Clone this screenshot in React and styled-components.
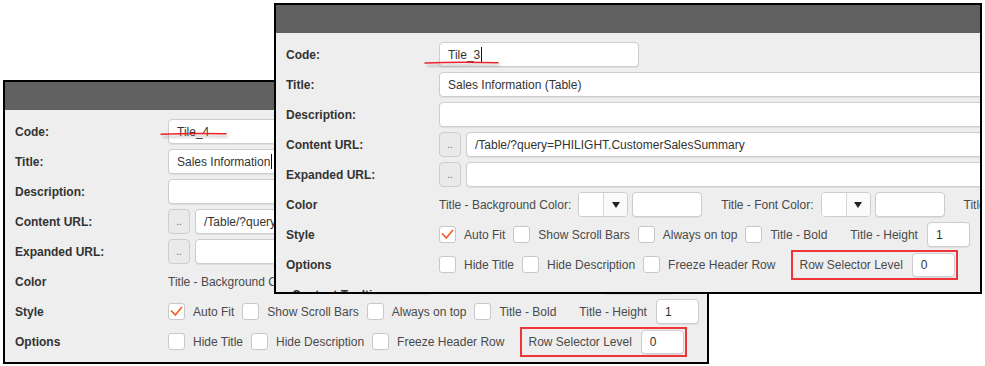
import React from 'react';
import styled, { createGlobalStyle } from 'styled-components';

const GlobalStyle = createGlobalStyle`
  html, body {
    margin: 0;
    padding: 0;
    background: #fff;
  }
  body {
    font-family: "Liberation Sans", Arial, sans-serif;
  }
`;

const Desktop = styled.div`
  position: relative;
  width: 985px;
  height: 366px;
  overflow: hidden;
  background: #fff;
`;

const Window = styled.section`
  position: absolute;
  left: ${p => p.$x}px;
  top: ${p => p.$y}px;
  width: ${p => p.$w}px;
  height: ${p => p.$h}px;
  box-sizing: border-box;
  border: 2px solid #000;
  background: #eeeeee;
  display: flex;
  flex-direction: column;
  overflow: hidden;
`;

const TitleBar = styled.header`
  flex: 0 0 28px;
  background: #616161;
`;

const Body = styled.div`
  display: flex;
  flex-direction: column;
  gap: 5px;
  padding: 9px 0 0 10px;
`;

const Row = styled.div`
  display: flex;
  align-items: center;
  flex-shrink: 0;
  height: 25px;
  white-space: nowrap;
  font-size: 12px;
  color: #4a4a4a;
`;

const Label = styled.div`
  flex: 0 0 153px;
  box-sizing: border-box;
  padding-left: ${p => p.$indent || 0}px;
  font-weight: bold;
  color: #333;
`;

const TextBox = styled.div`
  box-sizing: border-box;
  flex: 0 0 ${p => p.$w}px;
  height: ${p => p.$h || 25}px;
  margin-left: ${p => p.$ml || 0}px;
  padding: 0 8px;
  display: flex;
  align-items: center;
  background: #fff;
  border: 1px solid #cdcdcd;
  border-radius: 4px;
  box-shadow: 0 1px 1px rgba(0, 0, 0, 0.07);
  color: #333;
  font-size: 12px;
`;

const Caret = styled.span`
  display: inline-block;
  width: 1px;
  height: 15px;
  margin-left: 1px;
  background: #111;
`;

const Browse = styled.div`
  box-sizing: border-box;
  flex: 0 0 22px;
  height: 25px;
  margin-right: 5px;
  padding-bottom: 6px;
  display: flex;
  align-items: flex-end;
  justify-content: center;
  background: #eaeaea;
  border: 1px solid #cdcdcd;
  border-radius: 4px;
  color: #666;
  font-size: 10px;
  line-height: 1;
`;

const Text = styled.span`
  margin-left: ${p => p.$ml || 0}px;
  margin-right: ${p => p.$mr || 0}px;
`;

const Picker = styled.div`
  box-sizing: border-box;
  flex: 0 0 auto;
  display: flex;
  height: 25px;
  margin: 0 4px 0 ${p => p.$ml}px;
  background: #fff;
  border: 1px solid #cdcdcd;
  border-radius: 4px;
  overflow: hidden;
`;

const Swatch = styled.span`
  width: 24px;
  border-right: 1px solid #d8d8d8;
  background: #fff;
`;

const Arrow = styled.span`
  width: 23px;
  display: flex;
  align-items: center;
  justify-content: center;
  background: #fafafa;

  &::after {
    content: '';
    border-left: 4px solid transparent;
    border-right: 4px solid transparent;
    border-top: 6px solid #222;
  }
`;

const CheckBox = styled.span`
  box-sizing: border-box;
  flex: 0 0 17px;
  height: 17px;
  margin-right: 8px;
  display: flex;
  align-items: center;
  justify-content: center;
  background: #fff;
  border: 1px solid #c8c8c8;
  border-radius: 3px;
`;

const Highlight = styled.div`
  box-sizing: border-box;
  flex: 0 0 auto;
  display: flex;
  align-items: center;
  height: 30px;
  margin-left: 8px;
  padding: 0 1px 0 6px;
  border: 2px solid #ee3537;
`;

const Annotations = styled.svg`
  position: absolute;
  left: 0;
  top: 0;
  pointer-events: none;
`;

function Check({ checked }) {
  return (
    <CheckBox>
      {checked && (
        <svg width="15" height="15" viewBox="0 0 15 15">
          <polyline
            points="2.5,7 6.3,11 12.5,3.5"
            fill="none"
            stroke="#f0622a"
            strokeWidth="1.8"
            strokeLinecap="round"
            strokeLinejoin="round"
          />
        </svg>
      )}
    </CheckBox>
  );
}

function Option({ label, checked }) {
  return (
    <>
      <Check checked={checked} />
      <Text $mr={8}>{label}</Text>
    </>
  );
}

function TileForm({ code, title, codeCaret, titleCaret }) {
  return (
    <Body>
      <Row>
        <Label>Code:</Label>
        <TextBox $w={200}>
          {code}
          {codeCaret && <Caret />}
        </TextBox>
      </Row>
      <Row>
        <Label>Title:</Label>
        <TextBox $w={560}>
          {title}
          {titleCaret && <Caret />}
        </TextBox>
      </Row>
      <Row>
        <Label>Description:</Label>
        <TextBox $w={560} />
      </Row>
      <Row>
        <Label>Content URL:</Label>
        <Browse>..</Browse>
        <TextBox $w={560}>/Table/?query=PHILIGHT.CustomerSalesSummary</TextBox>
      </Row>
      <Row>
        <Label>Expanded URL:</Label>
        <Browse>..</Browse>
        <TextBox $w={560} />
      </Row>
      <Row>
        <Label>Color</Label>
        <Text>Title - Background Color:</Text>
        <Picker $ml={7}>
          <Swatch />
          <Arrow />
        </Picker>
        <TextBox $w={70} />
        <Text $ml={19}>Title - Font Color:</Text>
        <Picker $ml={7}>
          <Swatch />
          <Arrow />
        </Picker>
        <TextBox $w={70} />
        <Text $ml={19}>Title - Border Color:</Text>
      </Row>
      <Row>
        <Label>Style</Label>
        <Option label="Auto Fit" checked />
        <Option label="Show Scroll Bars" />
        <Option label="Always on top" />
        <Option label="Title - Bold" />
        <Text $ml={15}>Title - Height</Text>
        <TextBox $w={43} $ml={9}>1</TextBox>
      </Row>
      <Row>
        <Label>Options</Label>
        <Option label="Hide Title" />
        <Option label="Hide Description" />
        <Option label="Freeze Header Row" />
        <Highlight>
          <Text>Row Selector Level</Text>
          <TextBox $w={43} $h={24} $ml={9}>0</TextBox>
        </Highlight>
      </Row>
      <Row>
        <Label $indent={6}>Content Tooltips</Label>
      </Row>
    </Body>
  );
}

export default function App() {
  return (
    <Desktop>
      <GlobalStyle />
      <Window $x={3} $y={80} $w={706} $h={284}>
        <TitleBar />
        <TileForm code="Tile_4" title="Sales Information" titleCaret />
      </Window>
      <Window $x={274} $y={3} $w={708} $h={291}>
        <TitleBar />
        <TileForm code="Tile_3" title="Sales Information (Table)" codeCaret />
      </Window>
      <Annotations width="985" height="366">
        <defs>
          <filter id="soft" x="-10%" y="-200%" width="120%" height="500%">
            <feGaussianBlur stdDeviation="0.8" />
          </filter>
        </defs>
        <path d="M427 66 Q462 64.5 500 65.5" stroke="#777" strokeOpacity="0.45" strokeWidth="1.6" fill="none" filter="url(#soft)" />
        <path d="M425 63 Q460 61.6 498 62.8" stroke="#e8242a" strokeWidth="1.5" fill="none" strokeLinecap="round" />
        <path d="M163 137 Q195 135.8 228 136.6" stroke="#777" strokeOpacity="0.45" strokeWidth="1.6" fill="none" filter="url(#soft)" />
        <path d="M161 134.2 Q193 132.8 226 133.8" stroke="#e8242a" strokeWidth="1.5" fill="none" strokeLinecap="round" />
      </Annotations>
    </Desktop>
  );
}
